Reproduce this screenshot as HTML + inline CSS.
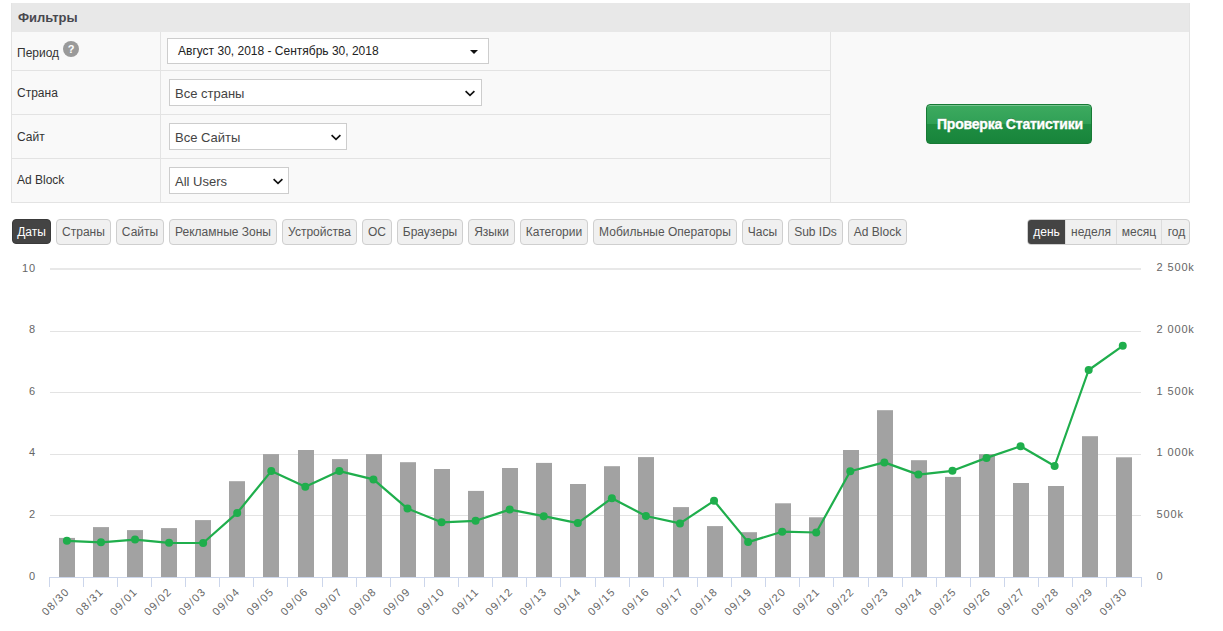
<!DOCTYPE html>
<html><head><meta charset="utf-8">
<style>
*{box-sizing:border-box;margin:0;padding:0}
html,body{width:1223px;height:631px;overflow:hidden;background:#fff;font-family:"Liberation Sans",sans-serif;color:#333}
.abs{position:absolute}
#panel{position:absolute;left:11px;top:3px;width:1179px;height:200px;background:#f9f9f9;border:1px solid #e3e3e3;border-top:none}
#hdr{position:absolute;left:0;top:0;width:100%;height:29px;background:#e8e8e8}
#hdr span{position:absolute;left:6px;top:6.5px;font-weight:bold;font-size:13px;color:#48484f;line-height:15px}
.hl{position:absolute;height:1px;background:#e3e3e3}
.vl{position:absolute;width:1px;background:#e3e3e3}
.lab{position:absolute;left:5px;font-size:12px;line-height:14px;color:#333}
.help{position:absolute;left:51px;top:38px;width:16px;height:16px;border-radius:50%;background:#9a9a9a;color:#fff;font-weight:bold;font-size:11px;line-height:17px;text-align:center}
.sel{position:absolute;background:#fff;border:1px solid #cdcdcd}
.sel span{position:absolute;left:5px;font-size:13px;color:#444;line-height:15px}
.chev{position:absolute}
#btn{position:absolute;left:926px;top:104px;width:166px;height:40px;border-radius:4px;border:1px solid #177a35;
 background:linear-gradient(#3daa60 0%,#30a055 50%,#1f8e42 50%,#18843b 100%);box-shadow:inset 0 1px 0 rgba(255,255,255,.3)}
#btn span{position:absolute;left:10px;top:11px;-webkit-text-stroke:0.35px #fff;font-weight:bold;font-size:14px;letter-spacing:-0.2px;color:#fff;line-height:16px;text-shadow:0 -1px 0 rgba(0,0,0,.25)}
.tab{position:absolute;top:219px;height:26px;border:1px solid #cfcfcf;border-radius:4px;background:#f0f0f0;font-size:12px;color:#555;line-height:24px;text-align:center;white-space:nowrap}
.tab.on{background:#444;border-color:#3a3a3a;color:#fff}
#grp{position:absolute;left:1027px;top:219px;width:163px;height:26px;border:1px solid #cfcfcf;border-radius:4px;background:#f0f0f0;overflow:hidden}
#grp div{position:absolute;top:0;height:24px;font-size:12px;line-height:24px;color:#555;text-align:center;border-left:1px solid #dcdcdc}
#grp div.on{background:#444;color:#fff;border-left:none}
svg{position:absolute;left:0;top:0}
svg text{font-family:"Liberation Sans",sans-serif;font-size:11px;fill:#666}
</style></head><body>
<div id="panel">
  <div id="hdr"><span>Фильтры</span></div>
  <div class="vl" style="left:148px;top:29px;height:170px"></div>
  <div class="vl" style="left:818px;top:29px;height:170px"></div>
  <div class="hl" style="left:0;top:67px;width:818px"></div>
  <div class="hl" style="left:0;top:111px;width:818px"></div>
  <div class="hl" style="left:0;top:155px;width:818px"></div>
  <div class="lab" style="top:43px">Период</div>
  <div class="help">?</div>
  <div class="lab" style="top:83px">Страна</div>
  <div class="lab" style="top:127px">Сайт</div>
  <div class="lab" style="top:170px">Ad Block</div>
</div>
<div class="sel" style="left:167px;top:38px;width:322px;height:26px"><span style="left:10px;top:5px;font-size:12px;color:#222">Август 30, 2018 - Сентябрь 30, 2018</span>
  <svg class="chev" style="left:302px;top:11px" width="9" height="5" viewBox="0 0 9 5"><path d="M0 0H8L4 4Z" fill="#111"/></svg></div>
<div class="sel" style="left:169px;top:79px;width:313px;height:27px"><span style="top:6px">Все страны</span>
  <svg class="chev" style="left:295px;top:10px" width="12" height="7" viewBox="0 0 12 7"><path d="M0.6 1.2L5 5.4L9.4 1.2" fill="none" stroke="#111" stroke-width="1.7"/></svg></div>
<div class="sel" style="left:169px;top:123px;width:178px;height:27px"><span style="top:6px">Все Сайты</span>
  <svg class="chev" style="left:161px;top:10px" width="12" height="7" viewBox="0 0 12 7"><path d="M0.6 1.2L5 5.4L9.4 1.2" fill="none" stroke="#111" stroke-width="1.7"/></svg></div>
<div class="sel" style="left:169px;top:167px;width:120px;height:27px"><span style="top:6px">All Users</span>
  <svg class="chev" style="left:103px;top:10px" width="12" height="7" viewBox="0 0 12 7"><path d="M0.6 1.2L5 5.4L9.4 1.2" fill="none" stroke="#111" stroke-width="1.7"/></svg></div>
<div id="btn"><span>Проверка Статистики</span></div>

<div class="tab on" style="left:12px;width:39px;height:25px;line-height:24px">Даты</div>
<div class="tab" style="left:56px;width:55px">Страны</div>
<div class="tab" style="left:116px;width:48px">Сайты</div>
<div class="tab" style="left:169px;width:108px">Рекламные Зоны</div>
<div class="tab" style="left:282px;width:75px">Устройства</div>
<div class="tab" style="left:362px;width:30px">ОС</div>
<div class="tab" style="left:397px;width:66px">Браузеры</div>
<div class="tab" style="left:468px;width:47px">Языки</div>
<div class="tab" style="left:520px;width:68px">Категории</div>
<div class="tab" style="left:593px;width:144px">Мобильные Операторы</div>
<div class="tab" style="left:742px;width:41px">Часы</div>
<div class="tab" style="left:788px;width:55px">Sub IDs</div>
<div class="tab" style="left:848px;width:59px">Ad Block</div>

<div id="grp">
  <div class="on" style="left:0;width:37px">день</div>
  <div style="left:37px;width:51px">неделя</div>
  <div style="left:88px;width:45px">месяц</div>
  <div style="left:133px;width:30px">год</div>
</div>

<svg width="1223" height="631" viewBox="0 0 1223 631" style="pointer-events:none">
<rect x="50" y="268" width="1091" height="2" fill="#e8e8e8"/>
<rect x="50" y="331" width="1091" height="1" fill="#e3e3e3"/>
<rect x="50" y="392" width="1091" height="1" fill="#e3e3e3"/>
<rect x="50" y="454" width="1091" height="1" fill="#e3e3e3"/>
<rect x="50" y="515" width="1091" height="1" fill="#e3e3e3"/>
<rect x="59" y="537.9" width="16" height="39.1" fill="#a2a2a2"/>
<rect x="93" y="527.1" width="16" height="49.9" fill="#a2a2a2"/>
<rect x="127" y="530.1" width="16" height="46.9" fill="#a2a2a2"/>
<rect x="161" y="528.1" width="16" height="48.9" fill="#a2a2a2"/>
<rect x="195" y="520.1" width="16" height="56.9" fill="#a2a2a2"/>
<rect x="229" y="481.2" width="16" height="95.8" fill="#a2a2a2"/>
<rect x="263" y="454.1" width="16" height="122.9" fill="#a2a2a2"/>
<rect x="298" y="450.0" width="16" height="127.0" fill="#a2a2a2"/>
<rect x="332" y="459.1" width="16" height="117.9" fill="#a2a2a2"/>
<rect x="366" y="454.1" width="16" height="122.9" fill="#a2a2a2"/>
<rect x="400" y="462.2" width="16" height="114.8" fill="#a2a2a2"/>
<rect x="434" y="469.0" width="16" height="108.0" fill="#a2a2a2"/>
<rect x="468" y="490.9" width="16" height="86.1" fill="#a2a2a2"/>
<rect x="502" y="468.0" width="16" height="109.0" fill="#a2a2a2"/>
<rect x="536" y="462.9" width="16" height="114.1" fill="#a2a2a2"/>
<rect x="570" y="484.0" width="16" height="93.0" fill="#a2a2a2"/>
<rect x="604" y="466.2" width="16" height="110.8" fill="#a2a2a2"/>
<rect x="638" y="457.1" width="16" height="119.9" fill="#a2a2a2"/>
<rect x="673" y="507.1" width="16" height="69.9" fill="#a2a2a2"/>
<rect x="707" y="526.1" width="16" height="50.9" fill="#a2a2a2"/>
<rect x="741" y="532.2" width="16" height="44.8" fill="#a2a2a2"/>
<rect x="775" y="503.3" width="16" height="73.7" fill="#a2a2a2"/>
<rect x="809" y="517.3" width="16" height="59.7" fill="#a2a2a2"/>
<rect x="843" y="450.0" width="16" height="127.0" fill="#a2a2a2"/>
<rect x="877" y="410.2" width="16" height="166.8" fill="#a2a2a2"/>
<rect x="911" y="460.2" width="16" height="116.8" fill="#a2a2a2"/>
<rect x="945" y="476.9" width="16" height="100.1" fill="#a2a2a2"/>
<rect x="979" y="454.1" width="16" height="122.9" fill="#a2a2a2"/>
<rect x="1013" y="483.0" width="16" height="94.0" fill="#a2a2a2"/>
<rect x="1048" y="486.0" width="16" height="91.0" fill="#a2a2a2"/>
<rect x="1082" y="436.2" width="16" height="140.8" fill="#a2a2a2"/>
<rect x="1116" y="457.3" width="16" height="119.7" fill="#a2a2a2"/>
<rect x="49" y="577" width="1093" height="1" fill="#ccd6eb"/>
<rect x="49" y="578" width="1" height="9" fill="#ccd6eb"/>
<rect x="83" y="578" width="1" height="9" fill="#ccd6eb"/>
<rect x="117" y="578" width="1" height="9" fill="#ccd6eb"/>
<rect x="151" y="578" width="1" height="9" fill="#ccd6eb"/>
<rect x="185" y="578" width="1" height="9" fill="#ccd6eb"/>
<rect x="219" y="578" width="1" height="9" fill="#ccd6eb"/>
<rect x="253" y="578" width="1" height="9" fill="#ccd6eb"/>
<rect x="287" y="578" width="1" height="9" fill="#ccd6eb"/>
<rect x="322" y="578" width="1" height="9" fill="#ccd6eb"/>
<rect x="356" y="578" width="1" height="9" fill="#ccd6eb"/>
<rect x="390" y="578" width="1" height="9" fill="#ccd6eb"/>
<rect x="424" y="578" width="1" height="9" fill="#ccd6eb"/>
<rect x="458" y="578" width="1" height="9" fill="#ccd6eb"/>
<rect x="492" y="578" width="1" height="9" fill="#ccd6eb"/>
<rect x="526" y="578" width="1" height="9" fill="#ccd6eb"/>
<rect x="560" y="578" width="1" height="9" fill="#ccd6eb"/>
<rect x="595" y="578" width="1" height="9" fill="#ccd6eb"/>
<rect x="629" y="578" width="1" height="9" fill="#ccd6eb"/>
<rect x="663" y="578" width="1" height="9" fill="#ccd6eb"/>
<rect x="697" y="578" width="1" height="9" fill="#ccd6eb"/>
<rect x="731" y="578" width="1" height="9" fill="#ccd6eb"/>
<rect x="765" y="578" width="1" height="9" fill="#ccd6eb"/>
<rect x="799" y="578" width="1" height="9" fill="#ccd6eb"/>
<rect x="833" y="578" width="1" height="9" fill="#ccd6eb"/>
<rect x="868" y="578" width="1" height="9" fill="#ccd6eb"/>
<rect x="902" y="578" width="1" height="9" fill="#ccd6eb"/>
<rect x="936" y="578" width="1" height="9" fill="#ccd6eb"/>
<rect x="970" y="578" width="1" height="9" fill="#ccd6eb"/>
<rect x="1004" y="578" width="1" height="9" fill="#ccd6eb"/>
<rect x="1038" y="578" width="1" height="9" fill="#ccd6eb"/>
<rect x="1072" y="578" width="1" height="9" fill="#ccd6eb"/>
<rect x="1106" y="578" width="1" height="9" fill="#ccd6eb"/>
<rect x="1141" y="578" width="1" height="9" fill="#ccd6eb"/>
<polyline points="66.90,540.8 100.96,542.3 135.02,539.6 169.08,542.8 203.14,543.0 237.20,512.9 271.26,471.1 305.32,486.8 339.38,471.1 373.44,479.4 407.50,508.6 441.56,522.3 475.62,520.8 509.68,509.6 543.74,516.2 577.80,523.1 611.86,498.2 645.92,516.0 679.98,523.4 714.04,500.8 748.10,542.1 782.16,531.7 816.22,532.5 850.28,471.3 884.34,462.4 918.40,474.6 952.46,470.8 986.52,457.9 1020.58,446.2 1054.64,466.0 1088.70,370.0 1122.76,345.8" fill="none" stroke="#1fae4c" stroke-width="2.2" stroke-linejoin="round"/>
<circle cx="66.90" cy="540.8" r="4" fill="#1fae4c"/>
<circle cx="100.96" cy="542.3" r="4" fill="#1fae4c"/>
<circle cx="135.02" cy="539.6" r="4" fill="#1fae4c"/>
<circle cx="169.08" cy="542.8" r="4" fill="#1fae4c"/>
<circle cx="203.14" cy="543.0" r="4" fill="#1fae4c"/>
<circle cx="237.20" cy="512.9" r="4" fill="#1fae4c"/>
<circle cx="271.26" cy="471.1" r="4" fill="#1fae4c"/>
<circle cx="305.32" cy="486.8" r="4" fill="#1fae4c"/>
<circle cx="339.38" cy="471.1" r="4" fill="#1fae4c"/>
<circle cx="373.44" cy="479.4" r="4" fill="#1fae4c"/>
<circle cx="407.50" cy="508.6" r="4" fill="#1fae4c"/>
<circle cx="441.56" cy="522.3" r="4" fill="#1fae4c"/>
<circle cx="475.62" cy="520.8" r="4" fill="#1fae4c"/>
<circle cx="509.68" cy="509.6" r="4" fill="#1fae4c"/>
<circle cx="543.74" cy="516.2" r="4" fill="#1fae4c"/>
<circle cx="577.80" cy="523.1" r="4" fill="#1fae4c"/>
<circle cx="611.86" cy="498.2" r="4" fill="#1fae4c"/>
<circle cx="645.92" cy="516.0" r="4" fill="#1fae4c"/>
<circle cx="679.98" cy="523.4" r="4" fill="#1fae4c"/>
<circle cx="714.04" cy="500.8" r="4" fill="#1fae4c"/>
<circle cx="748.10" cy="542.1" r="4" fill="#1fae4c"/>
<circle cx="782.16" cy="531.7" r="4" fill="#1fae4c"/>
<circle cx="816.22" cy="532.5" r="4" fill="#1fae4c"/>
<circle cx="850.28" cy="471.3" r="4" fill="#1fae4c"/>
<circle cx="884.34" cy="462.4" r="4" fill="#1fae4c"/>
<circle cx="918.40" cy="474.6" r="4" fill="#1fae4c"/>
<circle cx="952.46" cy="470.8" r="4" fill="#1fae4c"/>
<circle cx="986.52" cy="457.9" r="4" fill="#1fae4c"/>
<circle cx="1020.58" cy="446.2" r="4" fill="#1fae4c"/>
<circle cx="1054.64" cy="466.0" r="4" fill="#1fae4c"/>
<circle cx="1088.70" cy="370.0" r="4" fill="#1fae4c"/>
<circle cx="1122.76" cy="345.8" r="4" fill="#1fae4c"/>
<text x="36" y="272" text-anchor="end" letter-spacing="0.85">10</text>
<text x="36" y="333" text-anchor="end" letter-spacing="0.85">8</text>
<text x="36" y="395" text-anchor="end" letter-spacing="0.85">6</text>
<text x="36" y="456" text-anchor="end" letter-spacing="0.85">4</text>
<text x="36" y="518" text-anchor="end" letter-spacing="0.85">2</text>
<text x="36" y="580" text-anchor="end" letter-spacing="0.85">0</text>
<text x="1156.6" y="271" text-anchor="start" letter-spacing="0.85">2 500k</text>
<text x="1156.6" y="333" text-anchor="start" letter-spacing="0.85">2 000k</text>
<text x="1156.6" y="395" text-anchor="start" letter-spacing="0.85">1 500k</text>
<text x="1156.6" y="456" text-anchor="start" letter-spacing="0.85">1 000k</text>
<text x="1156.6" y="518" text-anchor="start" letter-spacing="0.85">500k</text>
<text x="1156.6" y="580" text-anchor="start" letter-spacing="0.85">0</text>
<text transform="translate(70.1,592.4) rotate(-45)" text-anchor="end" letter-spacing="1.25">08/30</text>
<text transform="translate(104.2,592.4) rotate(-45)" text-anchor="end" letter-spacing="1.25">08/31</text>
<text transform="translate(138.3,592.4) rotate(-45)" text-anchor="end" letter-spacing="1.25">09/01</text>
<text transform="translate(172.4,592.4) rotate(-45)" text-anchor="end" letter-spacing="1.25">09/02</text>
<text transform="translate(206.6,592.4) rotate(-45)" text-anchor="end" letter-spacing="1.25">09/03</text>
<text transform="translate(240.7,592.4) rotate(-45)" text-anchor="end" letter-spacing="1.25">09/04</text>
<text transform="translate(274.8,592.4) rotate(-45)" text-anchor="end" letter-spacing="1.25">09/05</text>
<text transform="translate(308.9,592.4) rotate(-45)" text-anchor="end" letter-spacing="1.25">09/06</text>
<text transform="translate(343.1,592.4) rotate(-45)" text-anchor="end" letter-spacing="1.25">09/07</text>
<text transform="translate(377.2,592.4) rotate(-45)" text-anchor="end" letter-spacing="1.25">09/08</text>
<text transform="translate(411.3,592.4) rotate(-45)" text-anchor="end" letter-spacing="1.25">09/09</text>
<text transform="translate(445.4,592.4) rotate(-45)" text-anchor="end" letter-spacing="1.25">09/10</text>
<text transform="translate(479.6,592.4) rotate(-45)" text-anchor="end" letter-spacing="1.25">09/11</text>
<text transform="translate(513.7,592.4) rotate(-45)" text-anchor="end" letter-spacing="1.25">09/12</text>
<text transform="translate(547.8,592.4) rotate(-45)" text-anchor="end" letter-spacing="1.25">09/13</text>
<text transform="translate(581.9,592.4) rotate(-45)" text-anchor="end" letter-spacing="1.25">09/14</text>
<text transform="translate(616.1,592.4) rotate(-45)" text-anchor="end" letter-spacing="1.25">09/15</text>
<text transform="translate(650.2,592.4) rotate(-45)" text-anchor="end" letter-spacing="1.25">09/16</text>
<text transform="translate(684.3,592.4) rotate(-45)" text-anchor="end" letter-spacing="1.25">09/17</text>
<text transform="translate(718.4,592.4) rotate(-45)" text-anchor="end" letter-spacing="1.25">09/18</text>
<text transform="translate(752.6,592.4) rotate(-45)" text-anchor="end" letter-spacing="1.25">09/19</text>
<text transform="translate(786.7,592.4) rotate(-45)" text-anchor="end" letter-spacing="1.25">09/20</text>
<text transform="translate(820.8,592.4) rotate(-45)" text-anchor="end" letter-spacing="1.25">09/21</text>
<text transform="translate(854.9,592.4) rotate(-45)" text-anchor="end" letter-spacing="1.25">09/22</text>
<text transform="translate(889.1,592.4) rotate(-45)" text-anchor="end" letter-spacing="1.25">09/23</text>
<text transform="translate(923.2,592.4) rotate(-45)" text-anchor="end" letter-spacing="1.25">09/24</text>
<text transform="translate(957.3,592.4) rotate(-45)" text-anchor="end" letter-spacing="1.25">09/25</text>
<text transform="translate(991.4,592.4) rotate(-45)" text-anchor="end" letter-spacing="1.25">09/26</text>
<text transform="translate(1025.6,592.4) rotate(-45)" text-anchor="end" letter-spacing="1.25">09/27</text>
<text transform="translate(1059.7,592.4) rotate(-45)" text-anchor="end" letter-spacing="1.25">09/28</text>
<text transform="translate(1093.8,592.4) rotate(-45)" text-anchor="end" letter-spacing="1.25">09/29</text>
<text transform="translate(1127.9,592.4) rotate(-45)" text-anchor="end" letter-spacing="1.25">09/30</text>
</svg>
</body></html>
